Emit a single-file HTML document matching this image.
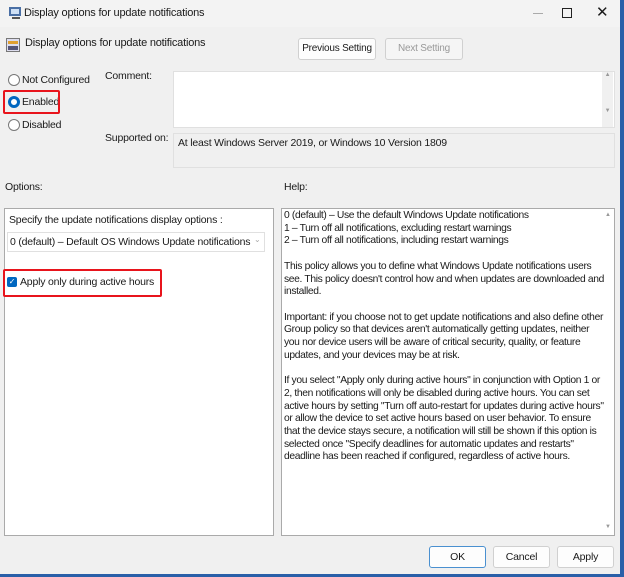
<!DOCTYPE html><html><head><style>
body{margin:0;width:624px;height:577px;background:#2a5fa8;font-family:"Liberation Sans",sans-serif;font-size:10.5px;letter-spacing:-0.2px;color:#1a1a1a;position:relative;overflow:hidden}
.dlg{position:absolute;left:0;top:0;width:620px;height:574px;background:#f0f0f0;border-radius:0 6px 0 0}
.a{position:absolute;white-space:nowrap}
.title{left:0;top:0;width:620px;height:27px;background:#f3f3f3}
.btn{position:absolute;background:#fdfdfd;border:1px solid #d0d0d0;border-radius:3px;text-align:center;line-height:20px;height:20px;white-space:nowrap}
.radio{position:absolute;width:10px;height:10px;border:1px solid #777;border-radius:50%;background:#fff}
.box{position:absolute;background:#fff;border:1px solid #c8c8c8}
.red{position:absolute;border:2px solid #e8141c;border-radius:2px}
</style></head><body><div class="dlg">
<div class="a title"></div>
<svg class="a" style="left:8px;top:6px" width="16" height="14"><rect x="1" y="1" width="12" height="9" fill="#4a6fa5"/><rect x="3" y="3" width="8" height="5" fill="#cfe0f5"/><rect x="4" y="11" width="8" height="2" fill="#555"/></svg>
<div class="a" style="left:24px;top:7px;font-size:11px">Display options for update notifications</div>
<div class="a" style="left:533px;top:13px;width:10px;border-top:1px solid #aaa"></div>
<div class="a" style="left:562px;top:8px;width:8px;height:8px;border:1px solid #222"></div>
<div class="a" style="left:596px;top:3px;font-size:15px">✕</div>
<svg class="a" style="left:6px;top:38px" width="14" height="14"><rect x="0.5" y="0.5" width="13" height="13" fill="#dde" stroke="#777"/><rect x="2" y="3" width="10" height="3" fill="#e0a030"/><rect x="2" y="8" width="10" height="4" fill="#557"/></svg>
<div class="a" style="left:25px;top:37px;font-size:11px">Display options for update notifications</div>
<div class="btn" style="left:298px;top:38px;width:76px;font-size:10px">Previous Setting</div>
<div class="btn" style="left:385px;top:38px;width:76px;color:#999;background:#f5f5f5;font-size:10px">Next Setting</div>
<div class="radio" style="left:8px;top:74px"></div><div class="a" style="left:22px;top:74px">Not Configured</div>
<div class="radio" style="left:8px;top:96px;border:3px solid #0067c0;width:6px;height:6px"></div><div class="a" style="left:22px;top:96px">Enabled</div>
<div class="red" style="left:3px;top:90px;width:53px;height:20px"></div>
<div class="radio" style="left:8px;top:119px"></div><div class="a" style="left:22px;top:119px">Disabled</div>
<div class="a" style="left:105px;top:70px">Comment:</div>
<div class="box" style="left:173px;top:71px;width:440px;height:55px;border-color:#e0e0e0"></div>
<div class="a" style="left:602px;top:72px;width:11px;height:55px;background:#f0f0f0;font-size:6px;color:#999;text-align:center;white-space:normal">▲<br><br><br><br><br><br>▼</div>
<div class="a" style="left:105px;top:132px">Supported on:</div>
<div class="box" style="left:173px;top:133px;width:440px;height:33px;background:#f0f0f0;border-color:#e0e0e0"></div>
<div class="a" style="left:178px;top:137px">At least Windows Server 2019, or Windows 10 Version 1809</div>
<div class="a" style="left:5px;top:181px">Options:</div>
<div class="a" style="left:284px;top:181px">Help:</div>
<div class="box" style="left:4px;top:208px;width:268px;height:326px;border-color:#aaa"></div>
<div class="a" style="left:9px;top:214px">Specify the update notifications display options :</div>
<div class="box" style="left:7px;top:232px;width:256px;height:18px;border-color:#e0e0e0"></div>
<div class="a" style="left:10px;top:236px">0 (default) – Default OS Windows Update notifications</div>
<div class="a" style="left:254px;top:235px;color:#aaa;font-size:8px">⌄</div>
<div class="a" style="left:7px;top:277px;width:10px;height:10px;background:#0067c0;border-radius:2px;color:#fff;font-size:8px;line-height:10px;text-align:center">✓</div>
<div class="a" style="left:20px;top:276px">Apply only during active hours</div>
<div class="red" style="left:3px;top:269px;width:155px;height:24px"></div>
<div class="box" style="left:281px;top:208px;width:332px;height:326px;border-color:#aaa"></div>
<div class="a" style="left:284px;top:210px;width:322px;line-height:12.7px;font-size:10.3px;letter-spacing:-0.35px;white-space:normal">0 (default) – Use the default Windows Update notifications<br>1 – Turn off all notifications, excluding restart warnings<br>2 – Turn off all notifications, including restart warnings<br><br>This policy allows you to define what Windows Update notifications users see. This policy doesn't control how and when updates are downloaded and installed.<br><br>Important: if you choose not to get update notifications and also define other Group policy so that devices aren't automatically getting updates, neither you nor device users will be aware of critical security, quality, or feature updates, and your devices may be at risk.<br><br>If you select "Apply only during active hours" in conjunction with Option 1 or 2, then notifications will only be disabled during active hours. You can set active hours by setting "Turn off auto-restart for updates during active hours" or allow the device to set active hours based on user behavior. To ensure that the device stays secure, a notification will still be shown if this option is selected once "Specify deadlines for automatic updates and restarts" deadline has been reached if configured, regardless of active hours.</div>
<div class="a" style="left:605px;top:212px;font-size:6px;color:#999">▲</div>
<div class="a" style="left:605px;top:524px;font-size:6px;color:#999">▼</div>
<div class="btn" style="left:429px;top:546px;width:55px;border-color:#4a90d0">OK</div>
<div class="btn" style="left:493px;top:546px;width:55px">Cancel</div>
<div class="btn" style="left:557px;top:546px;width:55px">Apply</div>
</div></body></html>
